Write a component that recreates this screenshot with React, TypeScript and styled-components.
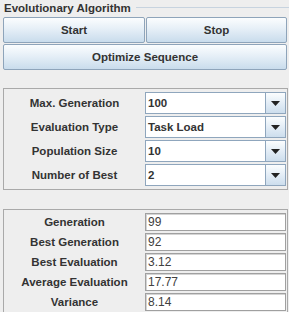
import React from "react";
import styled, { createGlobalStyle } from "styled-components";

const GlobalStyle = createGlobalStyle`
  html, body {
    margin: 0;
    padding: 0;
    background: #eeeeee;
  }
  body {
    font-family: "Liberation Sans", Arial, sans-serif;
  }
`;

const settings = [
  { label: "Max. Generation", value: "100" },
  { label: "Evaluation Type", value: "Task Load" },
  { label: "Population Size", value: "10" },
  { label: "Number of Best", value: "2" },
];

const stats = [
  { label: "Generation", value: "99" },
  { label: "Best Generation", value: "92" },
  { label: "Best Evaluation", value: "3.12" },
  { label: "Average Evaluation", value: "17.77" },
  { label: "Variance", value: "8.14" },
];

const App = () => {
  return (
    <>
      <GlobalStyle />
      <Frame>
        <TitleBar>
          <Title>Evolutionary Algorithm</Title>
          <TitleLine />
        </TitleBar>
        <ButtonRow>
          <Button>Start</Button>
          <Button>Stop</Button>
        </ButtonRow>
        <Button $wide>Optimize Sequence</Button>

        <Panel $top={18} $gap={2}>
          {settings.map((s) => (
            <Row key={s.label} $height={22}>
              <Label>{s.label}</Label>
              <Combo>
                <ComboValue>{s.value}</ComboValue>
                <ComboArrow>
                  <svg width="9" height="5" viewBox="0 0 9 5">
                    <path d="M0 0H9L4.5 5Z" fill="#222" />
                  </svg>
                </ComboArrow>
              </Combo>
            </Row>
          ))}
        </Panel>

        <Panel $top={19} $gap={2}>
          {stats.map((s) => (
            <Row key={s.label} $height={18}>
              <Label>{s.label}</Label>
              <Field>{s.value}</Field>
            </Row>
          ))}
        </Panel>
      </Frame>
    </>
  );
};

const Frame = styled.div`
  width: 289px;
  height: 312px;
  box-sizing: border-box;
  padding: 0 1px 0 3px;
  overflow: hidden;
  background: #eeeeee;
`;

const TitleBar = styled.div`
  display: flex;
  align-items: center;
  height: 15px;
  margin-right: -1px;
`;

const Title = styled.span`
  font-size: 11.5px;
  font-weight: bold;
  color: #333333;
  padding: 0 5px 0 1px;
  white-space: nowrap;
`;

const TitleLine = styled.div`
  flex: 1;
  height: 1px;
  background: #c7d3df;
`;

const ButtonRow = styled.div`
  display: grid;
  grid-template-columns: 142px 141px;
  gap: 0 1px;
  margin-top: 2px;
  margin-bottom: 1px;
`;

const Button = styled.div<{ $wide?: boolean }>`
  height: 26px;
  box-sizing: border-box;
  display: flex;
  align-items: center;
  justify-content: center;
  border: 1px solid #8ea4ba;
  border-radius: 2px;
  background: linear-gradient(#fbfdfe 0%, #e6eff7 45%, #c9dcec 100%);
  font-size: 11.5px;
  font-weight: bold;
  color: #333333;
  width: ${(p) => (p.$wide ? "284px" : "auto")};
`;

const Panel = styled.div<{ $top: number; $gap: number }>`
  margin-top: ${(p) => p.$top}px;
  border: 1px solid #a9a9a9;
  padding: 3px 1px 3px 0;
  display: flex;
  flex-direction: column;
  gap: ${(p) => p.$gap}px;
`;

const Row = styled.div<{ $height: number }>`
  display: grid;
  grid-template-columns: 1fr 141px;
  height: ${(p) => p.$height}px;
`;

const Label = styled.div`
  display: flex;
  align-items: center;
  justify-content: center;
  font-size: 11.5px;
  font-weight: bold;
  color: #333333;
  white-space: nowrap;
`;

const Combo = styled.div`
  display: flex;
  box-sizing: border-box;
  border: 1px solid #8fa6bd;
  background: #ffffff;
`;

const ComboValue = styled.div`
  flex: 1;
  display: flex;
  align-items: center;
  padding-left: 2px;
  font-size: 11.5px;
  font-weight: bold;
  color: #333333;
`;

const ComboArrow = styled.div`
  width: 19px;
  display: flex;
  align-items: center;
  justify-content: center;
  border-left: 1px solid #8fa6bd;
  background: linear-gradient(#fbfdfe 0%, #e3edf6 50%, #cddeed 100%);
`;

const Field = styled.div`
  box-sizing: border-box;
  display: flex;
  align-items: center;
  padding-left: 2px;
  border: 1px solid #a0a0a0;
  box-shadow: inset 1px 1px 0 #d4d4d4;
  background: #ffffff;
  font-size: 12px;
  color: #404040;
`;

export default App;
